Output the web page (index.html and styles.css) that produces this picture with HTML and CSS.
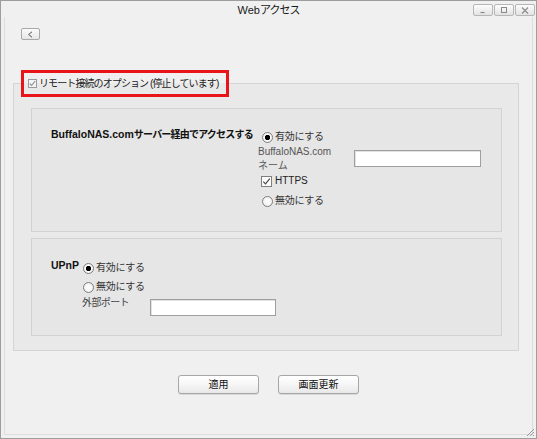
FILE: index.html
```html
<!DOCTYPE html>
<html lang="ja">
<head>
<meta charset="utf-8">
<title>Webアクセス</title>
<link rel="stylesheet" href="styles.css">
</head>
<body>
<div class="window">
  <div class="titlebar">
    <span></span>
    <span class="title">Web<span class="jp-title">アクセス</span></span>
    <div class="winbtns">
      <button class="wb" aria-label="最小化"><svg width="8" height="7" viewBox="0 0 8 7"><path d="M1.5 5.5h4" stroke="#8a8a8a" stroke-width="1.2" fill="none"/></svg></button>
      <button class="wb" aria-label="最大化"><svg width="8" height="7" viewBox="0 0 8 7"><rect x="1.5" y="0.5" width="5" height="5" stroke="#8a8a8a" fill="none"/></svg></button>
      <button class="wb" aria-label="閉じる"><svg width="8" height="7" viewBox="0 0 8 7"><path d="M1 0.5l6 6M7 0.5l-6 6" stroke="#8a8a8a" stroke-width="1.1" fill="none"/></svg></button>
    </div>
  </div>
  <div class="client">
    <div class="toolbar">
      <button class="back" aria-label="戻る"><svg width="7" height="7" viewBox="0 0 7 7"><path d="M5 0.8L1.6 3.5 5 6.2" stroke="#555" stroke-width="1" fill="none"/></svg></button>
    </div>
    <fieldset class="panel">
      <legend class="legend">
        <span class="cb cb-small"><svg width="7" height="7" viewBox="0 0 7 7"><path d="M0.8 3.6l1.8 1.9L6.2 1" stroke="#8a8a8a" stroke-width="1.1" fill="none"/></svg></span>
        <span class="legend-text">リモート接続のオプション (停止しています)</span>
      </legend>
      <div class="panel-body">
        <section class="box box-nas">
          <div class="box-label">BuffaloNAS.com<span class="jp-bold">サーバー経由でアクセスする</span></div>
          <div class="controls">
            <div class="opt opt-first"><span class="rb on"></span><span class="opt-text">有効にする</span></div>
            <div class="field">
              <span class="field-label">BuffaloNAS.com<br>ネーム</span>
              <span class="text-input"></span>
            </div>
            <div class="opt opt-https"><span class="cb"><svg width="9" height="9" viewBox="0 0 9 9"><path d="M1.3 4.6l2.2 2.3L7.8 1.6" stroke="#444" stroke-width="1.1" fill="none"/></svg></span><span class="opt-text dark">HTTPS</span></div>
            <div class="opt opt-off"><span class="rb"></span><span class="opt-text">無効にする</span></div>
          </div>
        </section>
        <section class="box box-upnp">
          <div class="box-label upnp-label">UPnP</div>
          <div class="controls">
            <div class="opt"><span class="rb on"></span><span class="opt-text">有効にする</span></div>
            <div class="opt opt-2"><span class="rb"></span><span class="opt-text">無効にする</span></div>
            <div class="port">
              <span class="port-label">外部ポート</span>
              <span class="text-input port-input"></span>
            </div>
          </div>
        </section>
      </div>
    </fieldset>
    <div class="actions">
      <button class="btn">適用</button>
      <button class="btn">画面更新</button>
    </div>
  </div>
  <svg class="grip" width="10" height="10" viewBox="0 0 10 10"><path d="M9 2L2 9M9 5L5 9M9 8L8 9" stroke="#9a9a9a" stroke-width="1" fill="none"/></svg>
</div>
</body>
</html>
```
FILE: styles.css
```css
html, body {
  margin: 0;
  padding: 0;
  background: #ffffff;
}

body {
  font-family: "Liberation Sans", "Noto Sans CJK JP", sans-serif;
  font-size: 10px;
  color: #222;
}

.window {
  position: relative;
  width: 537px;
  height: 439px;
  box-sizing: border-box;
  border: 1px solid #9d9d9d;
  background: #f0f0f0;
  display: flex;
  flex-direction: column;
}

.titlebar {
  height: 16px;
  display: grid;
  grid-template-columns: 1fr auto 1fr;
  align-items: center;
}

.title {
  font-size: 11px;
  line-height: 14px;
  color: #1a1a1a;
  padding-top: 1px;
}

.jp-title {
  letter-spacing: -1px;
}

.winbtns {
  justify-self: end;
  align-self: start;
  display: flex;
  gap: 1px;
  margin-top: 3px;
  margin-right: 1px;
}

.wb {
  width: 20px;
  height: 12px;
  box-sizing: border-box;
  border: 1px solid #b6b6b6;
  border-radius: 2px;
  background: linear-gradient(#fdfdfd, #e2e2e2);
  padding: 0;
  display: flex;
  align-items: center;
  justify-content: center;
}

.client {
  flex: 1;
  margin: 0 3px 3px;
  border: 1px solid #dddddd;
  border-top: 0;
  display: flex;
  flex-direction: column;
}

.toolbar {
  padding: 11px 0 0 16px;
  display: flex;
}

.back {
  width: 19px;
  height: 12px;
  box-sizing: border-box;
  border: 1px solid #a9a9a9;
  border-radius: 2px;
  background: linear-gradient(#fbfbfb, #e6e6e6);
  padding: 0;
  display: flex;
  align-items: center;
  justify-content: center;
}

.panel {
  margin: 30px 0 0 8px;
  width: 506px;
  box-sizing: border-box;
  border: 1px solid #d4d4d4;
  background: #e9e9e9;
  padding: 0;
  min-inline-size: 0;
}

.legend {
  margin-left: 7px;
  height: 27px;
  box-sizing: border-box;
  border: 3px solid #e8141a;
  padding: 0 8px 0 4px;
  display: flex;
  align-items: center;
  gap: 2px;
}

.legend-text {
  font-size: 10px;
  line-height: 14px;
  color: #222;
  letter-spacing: -0.9px;
}

.panel-body {
  padding: 11px 16px 14px 17px;
  display: flex;
  flex-direction: column;
  gap: 6px;
}

.box {
  box-sizing: border-box;
  border: 1px solid #d2d2d2;
  background: #e6e6e6;
  display: flex;
  align-items: flex-start;
}

.box-nas {
  height: 124px;
  padding: 20px 0 0 19px;
}

.box-upnp {
  height: 98px;
  padding: 20px 0 0 19px;
}

.box-label {
  font-weight: bold;
  font-size: 10.5px;
  line-height: 14px;
  color: #111;
  width: 207px;
  margin-top: -2px;
  white-space: nowrap;
}

.jp-bold {
  font-size: 10px;
  letter-spacing: -0.8px;
}

.upnp-label {
  width: 31px;
  margin-top: -1px;
}

.controls {
  display: flex;
  flex-direction: column;
}

.opt {
  display: flex;
  align-items: center;
  height: 18px;
}

.opt-first {
  height: 16px;
  padding-left: 4px;
}

.opt-https {
  height: 16px;
  padding-left: 3px;
}

.opt-off {
  height: 16px;
  margin-top: 4px;
  padding-left: 4px;
}

.box-upnp .opt {
  padding-left: 1px;
}

.box-upnp .opt-2 {
  margin-top: 1px;
}

.opt-text {
  font-size: 10px;
  line-height: 14px;
  color: #333;
  margin-left: 2px;
  letter-spacing: -0.3px;
}

.opt-text.dark {
  color: #222;
  margin-left: 3px;
  letter-spacing: 0;
}

.rb {
  width: 11px;
  height: 11px;
  box-sizing: border-box;
  border: 1px solid #7d7d7d;
  border-radius: 50%;
  background: radial-gradient(circle at 50% 50%, #ffffff 0, #f4f4f4 60%, #dcdcdc 100%);
  flex: none;
}

.rb.on {
  background: radial-gradient(circle at 50% 50%, #000 0, #000 2.3px, #fff 3px, #f2f2f2 4px);
}

.cb {
  width: 11px;
  height: 11px;
  box-sizing: border-box;
  border: 1px solid #7f7f7f;
  background: #fbfbfb;
  display: flex;
  align-items: center;
  justify-content: center;
  flex: none;
}

.cb-small {
  width: 9px;
  height: 9px;
  border-color: #9a9a9a;
  background: #f4f4f4;
}

.field {
  display: flex;
  align-items: flex-start;
  height: 28px;
}

.field-label {
  width: 96px;
  font-size: 10px;
  line-height: 14px;
  color: #555;
}

.text-input {
  display: block;
  width: 127px;
  height: 17px;
  box-sizing: border-box;
  border: 1px solid #9f9f9f;
  background: #fff;
  box-shadow: inset 1px 1px 0 #e2e2e2;
  margin-top: 5px;
}

.port {
  display: flex;
  align-items: flex-start;
  margin-top: 3px;
}

.port-label {
  width: 68px;
  font-size: 10px;
  line-height: 14px;
  color: #444;
  margin-top: -3px;
  letter-spacing: -0.6px;
}

.port-input {
  width: 126px;
  margin-top: 0;
}

.actions {
  display: flex;
  justify-content: center;
  gap: 19px;
  margin-top: 24px;
}

.btn {
  width: 81px;
  height: 19px;
  box-sizing: border-box;
  border: 1px solid #a6a6a6;
  border-radius: 3px;
  background: linear-gradient(#ffffff, #f6f6f6 50%, #e8e8e8);
  box-shadow: 0 1px 0 #d8d8d8;
  font-family: "Liberation Sans", "Noto Sans CJK JP", sans-serif;
  font-size: 10px;
  line-height: 12px;
  color: #111;
  padding: 0;
}

.grip {
  position: absolute;
  right: 1px;
  bottom: 1px;
}
```
